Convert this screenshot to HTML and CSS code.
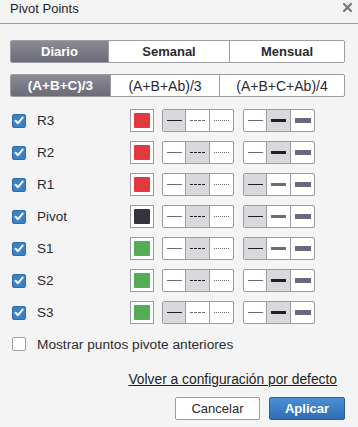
FILE: index.html
```html
<!DOCTYPE html>
<html lang="es">

<head>
    <meta charset="UTF-8">
    <title>Pivot Points</title>
    <link rel="stylesheet" href="styles.css">
</head>

<body>
    <div class="dialog">
        <div class="dialog-header">
            <span class="dialog-title">Pivot Points</span>
            <span class="close-btn">
                <svg width="9" height="9" viewBox="0 0 9 9">
                    <path d="M1 1 L8 8 M8 1 L1 8" stroke="#77767f" stroke-width="2.2" stroke-linecap="square" />
                </svg>
            </span>
        </div>

        <div class="dialog-body">
            <div class="tabs tabs-period">
                <div class="tab active">Diario</div>
                <div class="tab">Semanal</div>
                <div class="tab">Mensual</div>
            </div>

            <div class="tabs tabs-formula">
                <div class="tab active">(A+B+C)/3</div>
                <div class="tab">(A+B+Ab)/3</div>
                <div class="tab">(A+B+C+Ab)/4</div>
            </div>

            <div class="levels" id="levels"></div>

            <label class="check-row">
                <span class="checkbox"></span>
                <span>Mostrar puntos pivote anteriores</span>
            </label>

            <div class="reset-row">
                <a href="#" class="reset-link">Volver a configuración por defecto</a>
            </div>

            <div class="button-row">
                <button class="btn btn-cancel">Cancelar</button>
                <button class="btn btn-apply">Aplicar</button>
            </div>
        </div>
    </div>

    <script>
        const levels = [
            { name: 'R3', color: '#e2393f', style: 0, width: 1 },
            { name: 'R2', color: '#e2393f', style: 1, width: 1 },
            { name: 'R1', color: '#e2393f', style: 1, width: 0 },
            { name: 'Pivot', color: '#34343e', style: 1, width: 0 },
            { name: 'S1', color: '#53ad57', style: 1, width: 0 },
            { name: 'S2', color: '#53ad57', style: 1, width: 1 },
            { name: 'S3', color: '#53ad57', style: 0, width: 1 }
        ];

        const check = '<svg width="10" height="9" viewBox="0 0 10 9"><path d="M1.5 4.8 L4 7.2 L8.6 1.6" fill="none" stroke="#fff" stroke-width="2" stroke-linecap="round" stroke-linejoin="round"/></svg>';
        const styleLines = ['line-solid', 'line-dashed', 'line-dotted'];
        const widthLines = ['line-thin', 'line-medium', 'line-thick'];

        const container = document.getElementById('levels');
        levels.forEach(level => {
            let styleCells = '';
            styleLines.forEach((cls, i) => {
                styleCells += `<div class="cell${i === level.style ? ' selected' : ''}"><span class="line ${cls}"></span></div>`;
            });
            let widthCells = '';
            widthLines.forEach((cls, i) => {
                widthCells += `<div class="cell${i === level.width ? ' selected' : ''}"><span class="line ${cls}"></span></div>`;
            });

            const row = document.createElement('div');
            row.classList.add('level-row');
            row.innerHTML = `
                <span class="checkbox checked">${check}</span>
                <span class="level-name">${level.name}</span>
                <span class="swatch-box"><span class="swatch" style="background-color: ${level.color}"></span></span>
                <div class="seg">${styleCells}</div>
                <div class="seg">${widthCells}</div>
            `;
            container.appendChild(row);
        });
    </script>
</body>

</html>
```

FILE: styles.css
```css
body {
    margin: 0;
    padding: 0;
    font-family: "Liberation Sans", Arial, sans-serif;
    font-size: 13.5px;
    color: #2a2a30;
    background-color: #f4f4f4;
}

.dialog {
    width: 358px;
    height: 427px;
    background-color: #f4f4f4;
}

.dialog-header {
    height: 23px;
    border-bottom: 1px solid #9d9ca5;
    display: flex;
    align-items: center;
    justify-content: space-between;
    padding: 0 6px 0 10px;
}

.dialog-title {
    font-size: 13px;
    color: #1e1e24;
    margin-top: -6px;
}

.close-btn {
    display: flex;
    margin-top: -8px;
}

.dialog-body {
    padding: 16px 13px 0 10px;
}

/* tab bars */

.tabs {
    display: flex;
    height: 21px;
    border: 1px solid #9d9ca5;
    border-radius: 2px;
    background-color: #fff;
    overflow: hidden;
}

.tabs-formula {
    margin-top: 11px;
    font-size: 14px;
}

.tab {
    display: flex;
    align-items: center;
    justify-content: center;
    border-left: 1px solid #9d9ca5;
    color: #2a2a30;
}

.tab:first-child {
    border-left: none;
}

.tab.active {
    color: #fff;
    font-weight: bold;
    background: linear-gradient(#8b8a96, #6b6a77);
}

.tabs-period .tab {
    font-weight: bold;
    font-size: 13px;
}

.tabs-formula .tab.active {
    font-size: 13.5px;
}

.tabs-period .tab:nth-child(1) { width: 97px; }
.tabs-period .tab:nth-child(2) { width: 120px; }
.tabs-period .tab:nth-child(3) { flex: 1; }

.tabs-formula .tab:nth-child(1) { width: 99px; }
.tabs-formula .tab:nth-child(2) { width: 108px; }
.tabs-formula .tab:nth-child(3) { flex: 1; }

/* level rows */

.levels {
    margin-top: 12px;
    display: flex;
    flex-direction: column;
    gap: 9px;
}

.level-row {
    display: flex;
    align-items: center;
    height: 23px;
    padding-left: 2px;
}

.checkbox {
    width: 14px;
    height: 14px;
    box-sizing: border-box;
    border: 1px solid #a3a2aa;
    border-radius: 2px;
    background-color: #fff;
    display: flex;
    align-items: center;
    justify-content: center;
    flex-shrink: 0;
}

.checkbox.checked {
    border-color: #2f6fb3;
    background-color: #3c80c6;
}

.level-name {
    width: 93px;
    margin-left: 11px;
    color: #2a2a30;
}

.swatch-box {
    width: 24px;
    height: 23px;
    box-sizing: border-box;
    border: 1px solid #9d9ca5;
    background-color: #fff;
    display: flex;
    align-items: center;
    justify-content: center;
}

.swatch {
    width: 16px;
    height: 15px;
    border-radius: 1px;
}

.seg {
    display: flex;
    height: 23px;
    box-sizing: border-box;
    border: 1px solid #9d9ca5;
    border-radius: 2px;
    background-color: #fff;
    margin-left: 8px;
    overflow: hidden;
}

.seg + .seg {
    margin-left: 9px;
}

.cell {
    width: 23px;
    display: flex;
    align-items: center;
    justify-content: center;
    border-left: 1px solid #9d9ca5;
}

.cell:first-child {
    width: 22px;
    border-left: none;
}

.cell.selected {
    background-color: #d9d8dd;
}

.line {
    display: block;
    width: 15px;
}

.line-solid,
.line-thin {
    border-top: 1px solid #6b6a72;
}

.line-dashed {
    border-top: 1px dashed #6b6a72;
}

.line-dotted {
    border-top: 1px dotted #6b6a72;
}

.line-medium {
    height: 3px;
    background-color: #6b6a77;
}

.line-thick {
    width: 16px;
    height: 5px;
    background-color: #6b6a7a;
}

.cell.selected .line-solid,
.cell.selected .line-dashed,
.cell.selected .line-dotted,
.cell.selected .line-thin {
    border-top-color: #1f1f24;
}

.cell.selected .line-medium,
.cell.selected .line-thick {
    background-color: #1f1f24;
}

/* footer */

.check-row {
    display: flex;
    align-items: center;
    margin-top: 13px;
    padding-left: 2px;
    height: 14px;
    font-size: 13.7px;
}

.check-row .checkbox {
    margin-right: 11px;
}

.reset-row {
    display: flex;
    justify-content: flex-end;
    margin-top: 21px;
    padding-right: 8px;
}

.reset-link {
    color: #1e1e24;
    text-decoration: underline;
    font-size: 13.8px;
}

.button-row {
    display: flex;
    justify-content: flex-end;
    gap: 9px;
    margin-top: 10px;
}

.btn {
    height: 23px;
    font-family: "Liberation Sans", Arial, sans-serif;
    font-size: 13px;
    border-radius: 2px;
    cursor: pointer;
    padding: 0;
}

.btn-cancel {
    width: 85px;
    background-color: #fff;
    border: 1px solid #9d9ca5;
    color: #2a2a30;
}

.btn-apply {
    width: 76px;
    background: linear-gradient(#4b8fd5, #2f6db3);
    border: 1px solid #2a5f9c;
    color: #fff;
    font-weight: bold;
}
```
